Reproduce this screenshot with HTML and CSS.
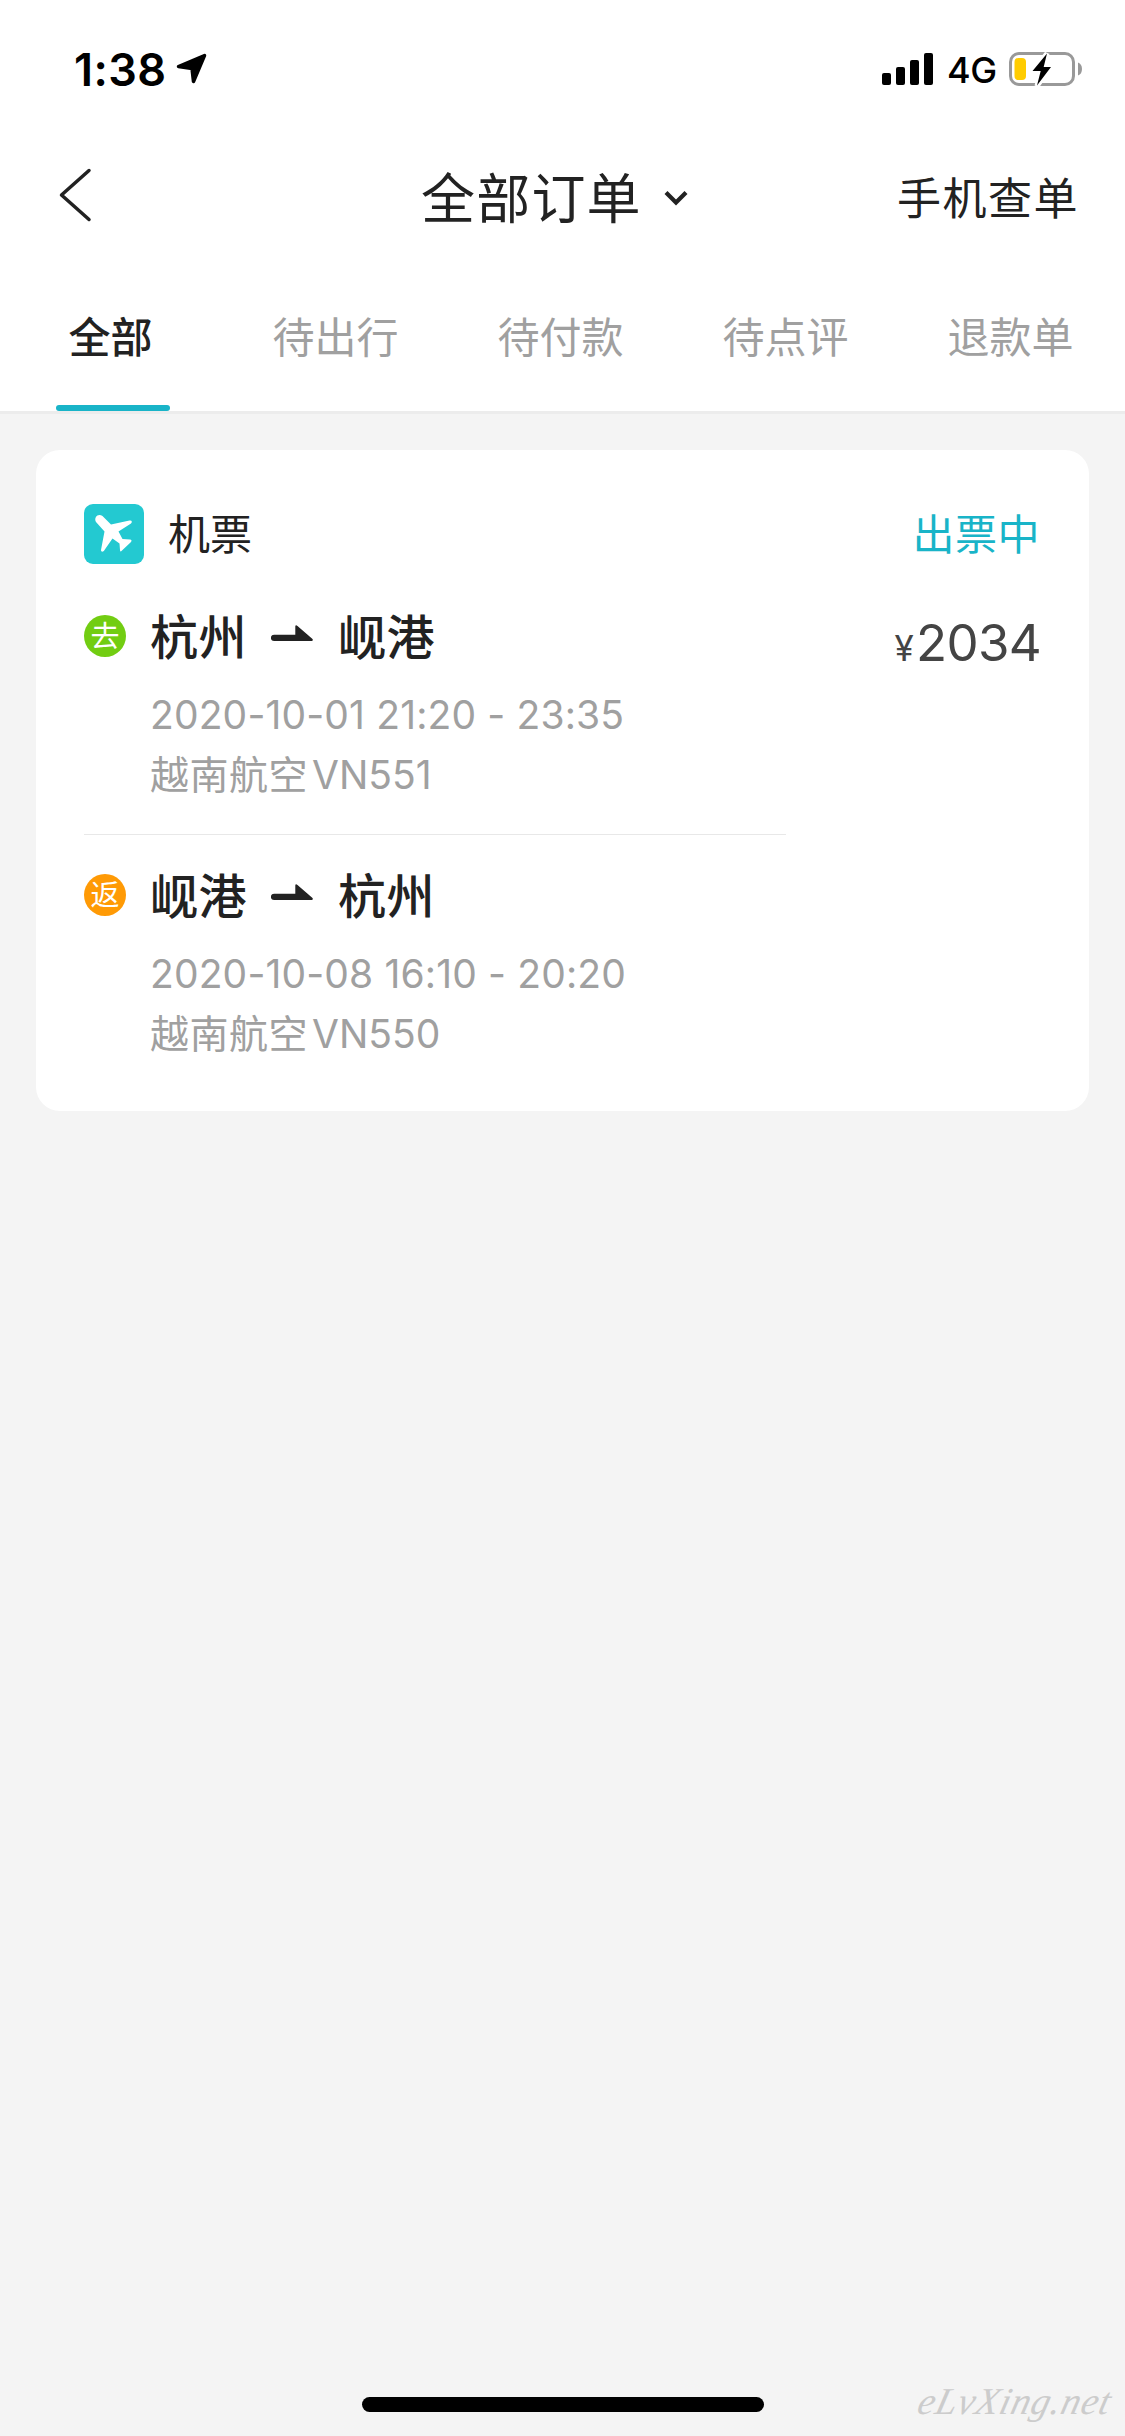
FILE: index.html
```html
<!DOCTYPE html>
<html lang="zh-CN">
<head>
<meta charset="utf-8">
<title>全部订单</title>
<link rel="stylesheet" href="styles.css">
</head>
<body>
<div class="screen">
  <header class="header">
    <div class="status">
      <span class="time">1:38</span>
      <svg class="location" width="32" height="32" viewBox="0 0 32 32"><path d="M2.5 13.5 28.5 2.5 17.500 28.500 16 15.500Z" stroke="#000" stroke-width="3.500" stroke-linejoin="round"/></svg>
      <svg class="signal" width="51" height="32" viewBox="0 0 51 32"><rect y="20" width="9" height="12" rx="2"/><rect x="14" y="14" width="9" height="18" rx="2"/><rect x="28" y="7" width="9" height="25" rx="2"/><rect x="42" width="9" height="32" rx="2"/></svg>
      <span class="network">4G</span>
      <svg class="battery" width="74" height="34" viewBox="0 0 74 34">
        <rect x="1.500" y="1.500" width="63" height="31" rx="8.500" fill="none" stroke="#999" stroke-width="3"/>
        <path d="M69 10.500Q73 12 73 17T69 23.500Z" fill="#999"/>
        <rect x="5.500" y="6" width="11.500" height="22" rx="4" fill="#fc0"/>
        <path d="M38 1.500 23.500 19H31.700L28 34 42 15H34.700Z" stroke="#fff" stroke-width="5"/>
        <path d="M38 1.500 23.500 19H31.700L28 33.500 42 15H34.700Z"/>
      </svg>
    </div>
    <nav class="nav">
      <svg class="back" width="34" height="54" viewBox="0 0 34 54"><path d="M30 2.500 2.500 27 30 51.500" fill="none" stroke="#222" stroke-width="3.500" stroke-linecap="round" stroke-linejoin="round"/></svg>
      <h1 class="title">全部订单</h1>
      <svg class="chevron" width="24" height="16" viewBox="0 0 24 16"><path d="M2 2.500 12 12.500 22 2.500" fill="none" stroke="#222" stroke-width="4.200"/></svg>
      <a class="lookup">手机查单</a>
    </nav>
    <div class="tabs">
      <a class="tab active"><span class="label">全部</span></a>
      <a class="tab"><span class="label">待出行</span></a>
      <a class="tab"><span class="label">待付款</span></a>
      <a class="tab"><span class="label">待点评</span></a>
      <a class="tab"><span class="label">退款单</span></a>
    </div>
  </header>

  <main class="card">
    <div class="card-head">
      <svg class="plane" width="60" height="60" viewBox="0 0 60 60"><rect width="60" height="60" rx="9" fill="#23c9d1"/><path d="M12 18C9.500 13.500 14 9 18.500 12L27 20.500 45.500 16.500C48 16 48.500 18 47 19.500L34.500 27.500 38.500 35 46 35.500Q48.500 36 47 38L38 46.500Q36 48.500 36 46L35.500 39.500 28.500 34.500 20.500 46C19.500 48 17 48.500 17 46L20.500 27.500Z" fill="#fff"/></svg>
      <span class="kind">机票</span>
      <span class="state">出票中</span>
    </div>
    <div class="card-body">
      <div class="legs">
        <section class="leg">
          <span class="badge go">去</span>
          <div class="info">
            <div class="route"><span>杭州</span><svg class="arrow" width="42" height="17" viewBox="0 0 42 17"><path d="M3 9.700H24.300V1.500Q24.500-.5 26.500 1L41.500 14Q42.500 16 40.500 16H3A3.150 3.150 0 0 1 3 9.700Z" fill="#222"/></svg><span>岘港</span></div>
            <div class="line date">2020-10-01 21:20 - 23:35</div>
            <div class="line"><span class="airline">越南航空</span>VN551</div>
          </div>
        </section>
        <section class="leg">
          <span class="badge ret">返</span>
          <div class="info">
            <div class="route"><span>岘港</span><svg class="arrow" width="42" height="17" viewBox="0 0 42 17"><path d="M3 9.700H24.300V1.500Q24.500-.5 26.500 1L41.500 14Q42.500 16 40.500 16H3A3.150 3.150 0 0 1 3 9.700Z" fill="#222"/></svg><span>杭州</span></div>
            <div class="line date">2020-10-08 16:10 - 20:20</div>
            <div class="line"><span class="airline">越南航空</span>VN550</div>
          </div>
        </section>
      </div>
      <div class="price"><span class="yen">¥</span>2034</div>
    </div>
  </main>

  <div class="home-bar"></div>
  <div class="watermark">eLvXing.net</div>
</div>
</body>
</html>
```

FILE: styles.css
```css
* { box-sizing: border-box; }

body {
  margin: 0;
  background: #f4f4f4;
  color: #222;
  font-family: Inter, "Noto Sans CJK SC", sans-serif;
}

svg { display: block; flex: none; }

.screen {
  position: relative;
  display: flex;
  flex-direction: column;
  width: 1125px;
  height: 2436px;
  overflow: hidden;
}

.header {
  height: 414px;
  background: #fff;
  border-bottom: 3px solid #ececec;
}

/* Status bar */
.status {
  display: flex;
  align-items: center;
  height: 132px;
  padding: 6px 42px 0 74px;
  color: #000;
}
.time { width: 102px; padding-top: 1px; font-size: 45px; font-weight: 600; line-height: 54px; letter-spacing: 0.400px; }
.signal { margin-left: auto; }
.network { width: 61px; padding: 2px 0 0 14px; font-size: 36px; font-weight: 450; line-height: 44px; letter-spacing: -0.300px; }
.battery { margin-left: 15px; }

/* Navigation */
.nav {
  display: flex;
  align-items: center;
  height: 132px;
  padding: 0 46px 0 59px;
  font-family: "Noto Sans CJK SC", sans-serif;
}
.back { margin-top: -6px; }
.title { margin: 0 0 0 328px; padding-bottom: 5px; font-size: 54px; font-weight: 400; line-height: 80px; letter-spacing: 1.200px; }
.chevron { margin-left: 22px; }
.lookup { margin-left: auto; padding-bottom: 4px; font-size: 44px; line-height: 66px; letter-spacing: 1.500px; }

/* Tabs */
.tabs { display: grid; grid-template-columns: repeat(5, 1fr); height: 147px; }
.tab {
  display: flex;
  flex-direction: column;
  align-items: center;
  padding-top: 39px;
  color: #a0a0a0;
  font: 42px/63px "Noto Sans CJK SC", sans-serif;
}
.label { padding-right: 4px; }
.active { color: #222; font-weight: 500; }
.active::after { content: ""; width: 114px; height: 6px; margin-top: 39px; border-radius: 3px; background: #19b4c8; }

/* Order card */
.card {
  height: 661px;
  margin: 36px;
  padding: 54px 48px 48px;
  border-radius: 24px;
  background: #fff;
}
.card-head { display: flex; align-items: center; height: 60px; font: 42px/60px "Noto Sans CJK SC", sans-serif; }
.kind { margin-left: 24px; padding-bottom: 4px; }
.state { margin-left: auto; padding: 0 1px 4px 0; color: #19b4c8; letter-spacing: 0.500px; }

.card-body { display: flex; justify-content: space-between; margin-top: 42px; }
.legs { width: 702px; }
.leg { display: flex; gap: 24px; }
.leg + .leg { margin-top: 30px; padding-top: 30px; border-top: 1px solid #e8e8e8; }

.badge {
  flex: none;
  width: 42px;
  height: 42px;
  margin-top: 9px;
  border-radius: 50%;
  color: #fff;
  font: 29px/38px "Noto Sans CJK SC", sans-serif;
  text-align: center;
}
.go { background: #72cd12; }
.ret { background: #ff9a05; }

.route {
  display: flex;
  align-items: center;
  height: 60px;
  margin-bottom: 19px;
  font: 500 48px/60px "Noto Sans CJK SC", sans-serif;
  letter-spacing: 0.500px;
}
.route span { padding-bottom: 4px; }
.arrow { margin: -6px 25px 0 24px; }
.line { height: 60px; color: #a0a0a0; font-size: 39px; line-height: 60px; white-space: nowrap; }
.line + .line { margin-bottom: -1px; }
.date { letter-spacing: 0.150px; }
.airline { margin-right: 4px; letter-spacing: 0.500px; }

.price { height: 60px; margin-top: 7px; color: #444; font-size: 51px; line-height: 60px; letter-spacing: -0.700px; }
.yen { margin-right: 3px; font-size: 35px; }

/* Page overlays */
.home-bar {
  width: 402px;
  height: 15px;
  margin: auto auto 24px 362px;
  border-radius: 8px;
  background: #000;
}
.watermark {
  position: absolute;
  right: 14px;
  bottom: 13px;
  color: #ccc;
  font: italic 38px/44px "Liberation Serif", serif;
  letter-spacing: 0.900px;
  transform: skewX(-14deg);
}
```
